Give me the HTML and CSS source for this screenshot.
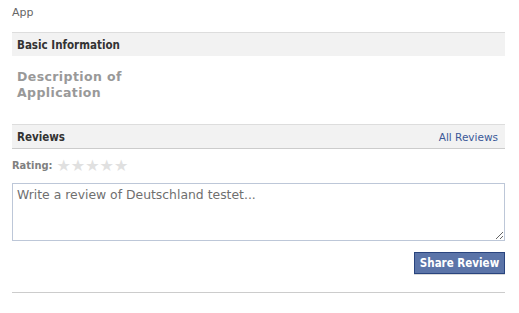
FILE: index.html
```html
<!DOCTYPE html>
<html lang="en">
<head>
  <meta charset="UTF-8" />
  <title>App</title>
  <link rel="stylesheet" href="styles.css">
</head>
<body>

<div class="page">
  <div class="app-label">App</div>

  <div class="box-header">
    <h2>Basic Information</h2>
  </div>
  <div class="info-body">
    <div class="info-label">Description of<br>Application</div>
  </div>

  <div class="box-header reviews-header">
    <h2>Reviews</h2>
    <a href="#" class="header-link">All Reviews</a>
  </div>

  <div class="rating">
    <span class="rating-label">Rating:</span>
    <span class="stars">&#9733;&#9733;&#9733;&#9733;&#9733;</span>
  </div>

  <textarea class="review-input" placeholder="Write a review of Deutschland testet..."></textarea>

  <div class="actions">
    <button class="share-btn">Share Review</button>
  </div>

  <div class="divider"></div>
</div>

</body>
</html>
```

FILE: styles.css
```css
* {
  box-sizing: border-box;
  margin: 0;
  padding: 0;
}

body {
  background: #fff;
  font-family: "DejaVu Sans", Verdana, sans-serif;
  font-size: 11px;
  color: #333;
}

.page {
  width: 493px;
  margin-left: 12px;
}

.app-label {
  color: #666;
  line-height: 14px;
  padding-top: 6px;
}

.box-header {
  margin-top: 12px;
  height: 24px;
  background: #f2f2f2;
  border-top: 1px solid #ddd;
  display: flex;
  align-items: center;
  justify-content: space-between;
  padding: 0 7px 0 5px;
}

.box-header h2,
.rating-label,
.share-btn {
  font-family: "DejaVu Sans Condensed", "DejaVu Sans", sans-serif;
  font-stretch: condensed;
  font-weight: bold;
}

.box-header h2 {
  font-size: 11.5px;
  color: #333;
}

.info-body {
  padding: 13px 0 0 5px;
  height: 68px;
}

.info-label {
  color: #999;
  font-weight: bold;
  font-size: 12.5px;
  letter-spacing: 0.4px;
  line-height: 16px;
  width: 130px;
}

.reviews-header {
  margin-top: 0;
  height: 25px;
  border-bottom: 1px solid #ccc;
}

.header-link {
  color: #3b5998;
  text-decoration: none;
  font-size: 10.5px;
}

.rating {
  display: flex;
  align-items: center;
  gap: 4px;
  height: 34px;
  padding-bottom: 2px;
}

.rating-label {
  color: #808080;
}

.stars {
  color: #e0e0e0;
  font-size: 16px;
}

.review-input {
  display: block;
  width: 493px;
  height: 58px;
  border: 1px solid #bdc7d8;
  padding: 3px 4px;
  font-family: "DejaVu Sans", Verdana, sans-serif;
  font-size: 12.4px;
  color: #333;
  resize: vertical;
}

.review-input::placeholder {
  color: #6f6f6f;
}

.actions {
  display: flex;
  justify-content: flex-end;
  padding-top: 11px;
}

.share-btn {
  background: #5b74a8;
  border: 1px solid #29447e;
  color: #fff;
  font-size: 11.5px;
  width: 91px;
  height: 22px;
  box-shadow: 0 1px 0 #d9d9d9;
}

.divider {
  margin-top: 18px;
  border-top: 1px solid #ccc;
}
```
